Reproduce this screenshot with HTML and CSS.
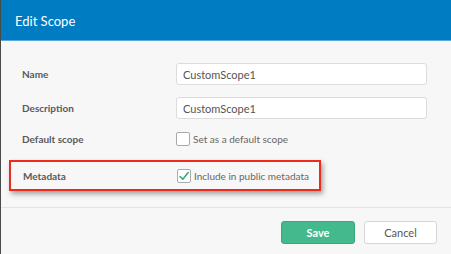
FILE: index.html
```html
<!DOCTYPE html>
<html lang="en">
<head>
  <meta charset="UTF-8">
  <meta name="viewport" content="width=device-width, initial-scale=1.0">
  <title>Edit Scope</title>
  <link rel="stylesheet" href="styles.css">
</head>
<body>
  <div class="modal">
    <div class="modalHeader">Edit Scope</div>

    <div class="modalBody">
      <div class="row row-input">
        <label class="label">Name</label>
        <input type="text" class="field" value="CustomScope1">
      </div>
      <div class="row row-input">
        <label class="label">Description</label>
        <input type="text" class="field" value="CustomScope1">
      </div>
      <div class="row row-check">
        <span class="label">Default scope</span>
        <span class="check"><span class="box"></span>Set as a default scope</span>
      </div>
      <div class="row row-check highlight">
        <span class="label">Metadata</span>
        <span class="check">
          <span class="box checked">
            <svg width="12" height="12" viewBox="0 0 12 12"><path d="M2 6.5 L4.8 9.2 L10.2 2.6" fill="none" stroke="#3aaa7f" stroke-width="1.6" stroke-linecap="round" stroke-linejoin="round"/></svg>
          </span>Include in public metadata
        </span>
      </div>
    </div>

    <div class="modalFooter">
      <button class="btn save">Save</button>
      <button class="btn cancel">Cancel</button>
    </div>
  </div>
</body>
</html>
```
FILE: styles.css
```css
* {
  box-sizing: border-box;
}

body {
  margin: 0;
  font-family: Lato, "Open Sans", sans-serif;
  background-color: #f7f7f7;
}

.modal {
  width: 451px;
  height: 254px;
  border-left: 1px solid #4a4a4a;
  background-color: #f7f7f7;
}

.modalHeader {
  height: 41px;
  padding: 13px 0 0 14px;
  background-color: #007cc2;
  border-bottom: 1px solid #5aa8dc;
  color: #fff;
  font-size: 13px;
}

.modalBody {
  padding: 22px 23px 0 21px;
}

.row {
  display: flex;
  align-items: center;
}
.row-input {
  height: 22px;
  margin-bottom: 12px;
}
.row-check {
  height: 16px;
  margin-top: 1px;
}

.label {
  width: 154px;
  flex-shrink: 0;
  font-size: 10px;
  font-weight: 700;
  color: #5a5a5a;
}

.field {
  width: 251px;
  height: 22px;
  border: 1px solid #dcdcdc;
  border-radius: 3px;
  padding: 0 6px;
  background-color: #fff;
  font-family: inherit;
  font-size: 11px;
  color: #555;
}

.check {
  display: flex;
  align-items: center;
  flex-shrink: 0;
  white-space: nowrap;
  font-size: 10px;
  color: #666;
}
.box {
  width: 14px;
  height: 14px;
  margin-right: 3px;
  border: 1px solid #aaa;
  border-radius: 2px;
  background-color: #fff;
  display: flex;
  align-items: center;
  justify-content: center;
}
.box.checked svg {
  margin-top: 1px;
}

.highlight {
  width: 312px;
  height: 31px;
  margin: 13px 0 0 -13px;
  padding-left: 12px;
  border: 2px solid #ee2a1a;
  box-shadow: 2px 3px 5px rgba(0, 0, 0, 0.35);
}

.modalFooter {
  margin-top: 16px;
  padding: 13px 14px 0 0;
  border-top: 1px solid #e3e3e3;
  display: flex;
  justify-content: flex-end;
  gap: 9px;
}

.btn {
  width: 74px;
  height: 23px;
  border-radius: 3px;
  font-family: inherit;
  font-size: 11px;
}
.save {
  background-color: #45b98e;
  border: 1px solid #3aa77e;
  color: #fff;
  font-weight: 700;
}
.cancel {
  width: 73px;
  background-color: #fff;
  border: 1px solid #d6d6d6;
  color: #555;
}
```
